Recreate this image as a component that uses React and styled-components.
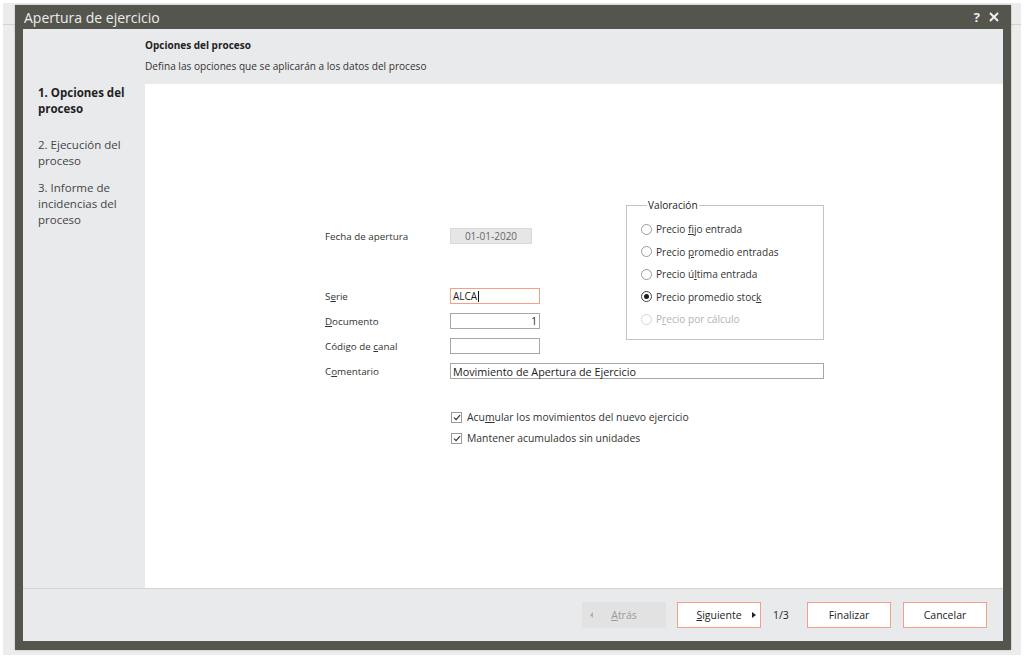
import React from 'react';
import styled, { createGlobalStyle } from 'styled-components';

const GlobalStyle = createGlobalStyle`
  html, body {
    margin: 0;
    padding: 0;
    background: #ffffff;
  }
  body {
    font-family: "Open Sans", "Noto Sans", sans-serif;
    color: #333333;
  }
`;

const Desktop = styled.div`
  position: relative;
  margin: 3px;
  width: 1018px;
  height: 652px;
  background: #ececed;
`;

const DesktopBar = styled.div`
  height: 21px;
  border-bottom: 1px solid #d2d2d4;
`;

const Window = styled.div`
  position: absolute;
  left: 12px;
  top: 2px;
  width: 996px;
  height: 645px;
  box-sizing: border-box;
  background: #54554d;
  display: flex;
  flex-direction: column;
  padding: 0 8px 9px 8px;
  box-shadow: 0 0 2px rgba(0, 0, 0, 0.25);
`;

const TitleBar = styled.div`
  height: 24px;
  display: flex;
  align-items: center;
  justify-content: space-between;
  color: #ededed;
`;

const TitleText = styled.span`
  font-size: 14px;
  margin-left: 1px;
`;

const TitleActions = styled.div`
  display: flex;
  align-items: center;
  gap: 9px;
  margin-right: 4px;
  font-size: 13px;
  font-weight: 700;
`;

const DialogBody = styled.div`
  flex: 1;
  display: grid;
  grid-template-columns: 122px 1fr;
  grid-template-rows: 55px 1fr 53px;
  background: #e9eaec;
`;

const Header = styled.div`
  grid-column: 2;
  grid-row: 1;
  padding-top: 9px;
`;

const HeaderTitle = styled.div`
  font-size: 10px;
  font-weight: 700;
  color: #222222;
  line-height: 14px;
`;

const HeaderText = styled.div`
  font-size: 10.1px;
  color: #333333;
  line-height: 14px;
  margin-top: 7px;
`;

const Nav = styled.div`
  grid-column: 1;
  grid-row: 2;
  padding: 1px 0 0 15px;
`;

const NavItem = styled.div`
  font-size: 11.5px;
  line-height: 16px;
  font-weight: ${p => (p.$active ? 700 : 400)};
  color: ${p => (p.$active ? '#1f1f1f' : '#444444')};
  margin-bottom: ${p => (p.$active ? '20px' : '11px')};
`;

const Content = styled.div`
  grid-column: 2;
  grid-row: 2;
  background: #ffffff;
  padding: 114px 0 0 180px;
  font-size: 9.8px;
`;

const FormArea = styled.div`
  display: flex;
  align-items: flex-start;
`;

const Fields = styled.div`
  width: 301px;
  padding-top: 30px;
`;

const FieldRow = styled.div`
  display: flex;
  align-items: center;
  height: 16px;
  margin-top: ${p => p.$gap || 0}px;
`;

const Label = styled.span`
  width: 125px;
  flex: none;
  color: #333333;
`;

const U = styled.u`
  text-underline-offset: 1px;
`;

const TextBox = styled.div`
  box-sizing: border-box;
  width: ${p => p.$width || 90}px;
  height: 16px;
  border: 1px solid ${p => (p.$focus ? '#f2a088' : '#a7a7a7')};
  background: #ffffff;
  display: flex;
  align-items: center;
  justify-content: ${p => (p.$right ? 'flex-end' : 'flex-start')};
  padding: 0 2px;
  color: #222222;
  font-size: ${p => (p.$large ? '10.8px' : '10px')};
  white-space: nowrap;
`;

const Caret = styled.span`
  display: inline-block;
  width: 1px;
  height: 11px;
  background: #111111;
  margin-left: 1px;
`;

const DateBox = styled.div`
  box-sizing: border-box;
  width: 82px;
  height: 16px;
  background: #e6e6e7;
  border: 1px solid #d9d9da;
  color: #666666;
  font-size: 10px;
  display: flex;
  align-items: center;
  justify-content: center;
`;

const GroupBox = styled.fieldset`
  box-sizing: border-box;
  width: 198px;
  height: 142px;
  margin: 0;
  padding: 6px 0 0 14px;
  border: 1px solid #c3c3c5;
  font-size: 10.1px;
`;

const Legend = styled.legend`
  padding: 0 1px;
  margin-left: 6px;
  line-height: 14px;
  color: #222222;
`;

const RadioRow = styled.div`
  display: flex;
  align-items: center;
  gap: 4px;
  height: 22.5px;
  color: ${p => (p.$disabled ? '#b3b3b3' : '#333333')};
`;

const RadioDot = styled.span`
  box-sizing: border-box;
  width: 11px;
  height: 11px;
  border-radius: 50%;
  border: 1px solid ${p => (p.$disabled ? '#d6d6d6' : p.$checked ? '#444444' : '#9a9a9a')};
  display: flex;
  align-items: center;
  justify-content: center;
  &::after {
    content: '';
    width: 5px;
    height: 5px;
    border-radius: 50%;
    background: ${p => (p.$checked ? '#1e1e1e' : 'transparent')};
  }
`;

const Checks = styled.div`
  margin: 30px 0 0 125px;
  display: flex;
  flex-direction: column;
  gap: 5px;
`;

const CheckRow = styled.div`
  display: flex;
  align-items: center;
  gap: 5px;
  height: 16px;
  color: #333333;
  font-size: 10.4px;
`;

const CheckBox = styled.span`
  box-sizing: border-box;
  width: 11px;
  height: 11px;
  border: 1px solid #9a9a9a;
  display: flex;
  align-items: center;
  justify-content: center;
  margin-left: 1px;
`;

const Footer = styled.div`
  grid-column: 1 / 3;
  grid-row: 3;
  border-top: 1px solid #d4d4d6;
  display: flex;
  align-items: center;
  justify-content: flex-end;
  padding-right: 16px;
  font-size: 10.5px;
`;

const Button = styled.div`
  box-sizing: border-box;
  width: 84px;
  height: 26px;
  display: flex;
  align-items: center;
  justify-content: center;
  position: relative;
  margin-left: ${p => p.$gap || 0}px;
  background: ${p => (p.$disabled ? '#e2e2e3' : '#ffffff')};
  border: 1px solid ${p => (p.$disabled ? '#e2e2e3' : '#f2a088')};
  color: ${p => (p.$disabled ? '#9a9a9a' : '#222222')};
`;

const Arrow = styled.span`
  position: absolute;
  top: 50%;
  width: 0;
  height: 0;
  border-top: 3px solid transparent;
  border-bottom: 3px solid transparent;
  transform: translateY(-50%);
  ${p =>
    p.$left
      ? 'left: 7px; border-right: 3px solid #b0b0b0;'
      : 'right: 4px; border-left: 4px solid #222222;'}
`;

const PageCount = styled.span`
  width: 18px;
  margin: 0 16px 0 12px;
  color: #222222;
`;

const radios = [
  { label: <>Precio <U>f</U>ijo entrada</> },
  { label: <>Precio <U>p</U>romedio entradas</> },
  { label: <>Precio ú<U>l</U>tima entrada</> },
  { label: <>Precio promedio stoc<U>k</U></>, checked: true },
  { label: <>P<U>r</U>ecio por cálculo</>, disabled: true },
];

const Check = () => (
  <CheckBox>
    <svg width="8" height="7" viewBox="0 0 8 7">
      <path d="M1 3.6 L3.1 5.6 L7 1.2" fill="none" stroke="#333" strokeWidth="1.2" />
    </svg>
  </CheckBox>
);

export default function App() {
  return (
    <>
      <GlobalStyle />
      <Desktop>
        <DesktopBar />
        <Window>
          <TitleBar>
            <TitleText>Apertura de ejercicio</TitleText>
            <TitleActions>
              <span>?</span>
              <svg width="10" height="10" viewBox="0 0 10 10">
                <path d="M1 1 L9 9 M9 1 L1 9" stroke="#f2f2f2" strokeWidth="2" />
              </svg>
            </TitleActions>
          </TitleBar>
          <DialogBody>
            <Header>
              <HeaderTitle>Opciones del proceso</HeaderTitle>
              <HeaderText>Defina las opciones que se aplicarán a los datos del proceso</HeaderText>
            </Header>
            <Nav>
              <NavItem $active>1. Opciones del<br />proceso</NavItem>
              <NavItem>2. Ejecución del<br />proceso</NavItem>
              <NavItem>3. Informe de<br />incidencias del<br />proceso</NavItem>
            </Nav>
            <Content>
              <FormArea>
                <Fields>
                  <FieldRow>
                    <Label>Fecha de apertura</Label>
                    <DateBox>01-01-2020</DateBox>
                  </FieldRow>
                  <FieldRow $gap={44}>
                    <Label>S<U>e</U>rie</Label>
                    <TextBox $focus>ALCA<Caret /></TextBox>
                  </FieldRow>
                  <FieldRow $gap={9}>
                    <Label><U>D</U>ocumento</Label>
                    <TextBox $right>1</TextBox>
                  </FieldRow>
                  <FieldRow $gap={9}>
                    <Label>Código de <U>c</U>anal</Label>
                    <TextBox />
                  </FieldRow>
                </Fields>
                <GroupBox>
                  <Legend>Valoración</Legend>
                  {radios.map((r, i) => (
                    <RadioRow key={i} $disabled={r.disabled}>
                      <RadioDot $checked={r.checked} $disabled={r.disabled} />
                      <span>{r.label}</span>
                    </RadioRow>
                  ))}
                </GroupBox>
              </FormArea>
              <FieldRow $gap={9}>
                <Label>C<U>o</U>mentario</Label>
                <TextBox $width={374} $large>Movimiento de Apertura de Ejercicio</TextBox>
              </FieldRow>
              <Checks>
                <CheckRow>
                  <Check />
                  <span>Acu<U>m</U>ular los movimientos del nuevo ejercicio</span>
                </CheckRow>
                <CheckRow>
                  <Check />
                  <span>Mantener acumulados sin unidades</span>
                </CheckRow>
              </Checks>
            </Content>
            <Footer>
              <Button $disabled>
                <Arrow $left />
                <span><U>A</U>trás</span>
              </Button>
              <Button $gap={11}>
                <span><U>S</U>iguiente</span>
                <Arrow />
              </Button>
              <PageCount>1/3</PageCount>
              <Button>Finalizar</Button>
              <Button $gap={12}>Cancelar</Button>
            </Footer>
          </DialogBody>
        </Window>
      </Desktop>
    </>
  );
}
